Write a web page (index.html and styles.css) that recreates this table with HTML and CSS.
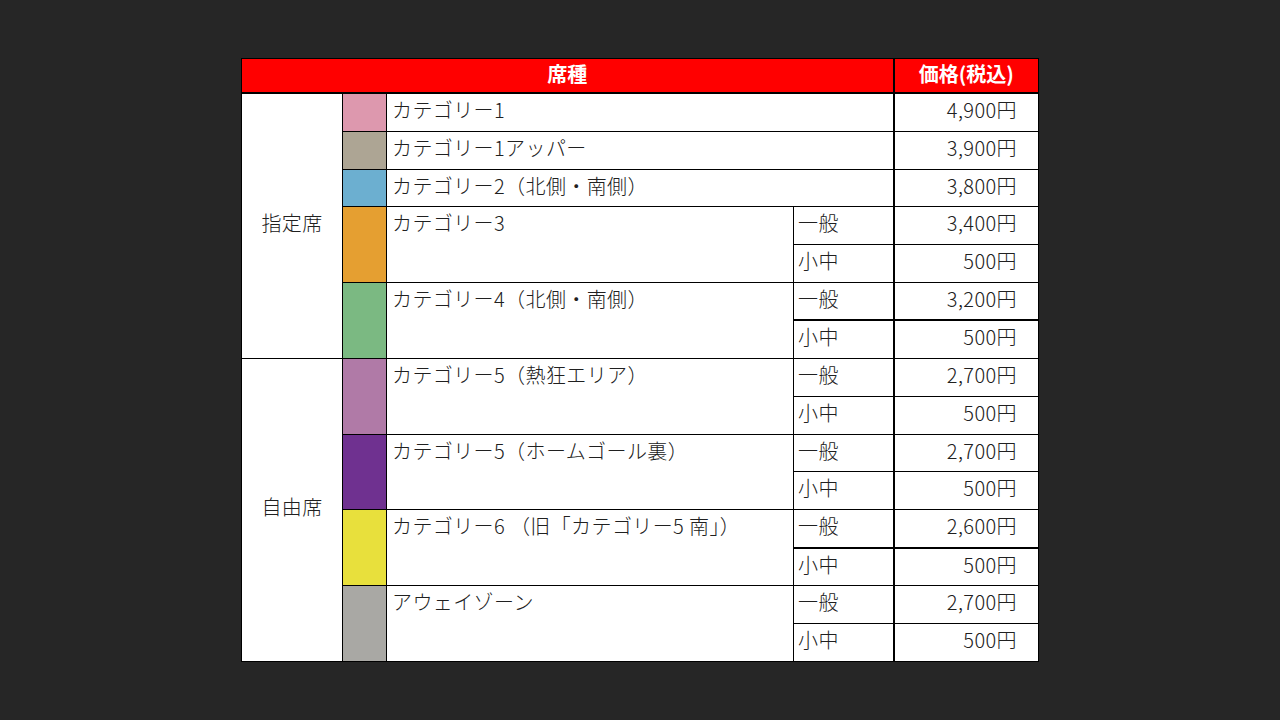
FILE: index.html
```html
<!DOCTYPE html>
<html lang="ja">
<head>
<meta charset="utf-8">
<title>席種・価格</title>
<link rel="stylesheet" href="styles.css">
</head>
<body>
<table class="price-table">
  <colgroup>
    <col class="c-type"><col class="c-swatch"><col class="c-name"><col class="c-sub"><col class="c-price">
  </colgroup>
  <thead>
    <tr class="head">
      <th colspan="4">席種</th>
      <th class="price">価格(税込)</th>
    </tr>
  </thead>
  <tbody>
    <tr>
      <td class="type" rowspan="7">指定席</td>
      <td class="swatch sw-pink"></td>
      <td class="name" colspan="2">カテゴリー1</td>
      <td class="price">4,900円</td>
    </tr>
    <tr>
      <td class="swatch sw-taupe"></td>
      <td class="name" colspan="2">カテゴリー1アッパー</td>
      <td class="price">3,900円</td>
    </tr>
    <tr>
      <td class="swatch sw-blue"></td>
      <td class="name" colspan="2">カテゴリー2（北側・南側）</td>
      <td class="price">3,800円</td>
    </tr>
    <tr>
      <td class="swatch sw-orange" rowspan="2"></td>
      <td class="name" rowspan="2">カテゴリー3</td>
      <td class="sub">一般</td>
      <td class="price">3,400円</td>
    </tr>
    <tr>
      <td class="sub">小中</td>
      <td class="price">500円</td>
    </tr>
    <tr>
      <td class="swatch sw-green" rowspan="2"></td>
      <td class="name" rowspan="2">カテゴリー4（北側・南側）</td>
      <td class="sub">一般</td>
      <td class="price">3,200円</td>
    </tr>
    <tr class="thick-top">
      <td class="sub">小中</td>
      <td class="price">500円</td>
    </tr>
    <tr>
      <td class="type" rowspan="8">自由席</td>
      <td class="swatch sw-mauve" rowspan="2"></td>
      <td class="name" rowspan="2">カテゴリー5（熱狂エリア）</td>
      <td class="sub">一般</td>
      <td class="price">2,700円</td>
    </tr>
    <tr>
      <td class="sub">小中</td>
      <td class="price">500円</td>
    </tr>
    <tr>
      <td class="swatch sw-purple" rowspan="2"></td>
      <td class="name" rowspan="2">カテゴリー5（ホームゴール裏）</td>
      <td class="sub">一般</td>
      <td class="price">2,700円</td>
    </tr>
    <tr>
      <td class="sub">小中</td>
      <td class="price">500円</td>
    </tr>
    <tr>
      <td class="swatch sw-yellow" rowspan="2"></td>
      <td class="name" rowspan="2">カテゴリー6 （旧「カテゴリー5 南」）</td>
      <td class="sub">一般</td>
      <td class="price">2,600円</td>
    </tr>
    <tr class="thick-top">
      <td class="sub">小中</td>
      <td class="price">500円</td>
    </tr>
    <tr>
      <td class="swatch sw-grey" rowspan="2"></td>
      <td class="name" rowspan="2">アウェイゾーン</td>
      <td class="sub">一般</td>
      <td class="price">2,700円</td>
    </tr>
    <tr>
      <td class="sub">小中</td>
      <td class="price">500円</td>
    </tr>
  </tbody>
</table>
</body>
</html>
```

FILE: styles.css
```css
html, body {
  margin: 0;
  padding: 0;
}
body {
  width: 1280px;
  height: 720px;
  background: #262626;
  display: flex;
  align-items: center;
  justify-content: center;
  font-family: "Noto Sans CJK JP", "Noto Sans", sans-serif;
  color: #202020;
}
.price-table {
  width: 797px;
  border-collapse: collapse;
  table-layout: fixed;
  background: #ffffff;
  font-size: 20px;
  font-weight: 300;
  letter-spacing: 0.4px;
  border: 1px solid #000;
}
.c-type { width: 101px; }
.c-swatch { width: 44px; }
.c-name { width: 407px; }
.c-sub { width: 100px; }
.c-price { width: 145px; }

.price-table th,
.price-table td {
  border: 1px solid #000;
  padding: 0;
  line-height: 32px;
  vertical-align: top;
  white-space: nowrap;
}
.price-table tbody tr {
  height: 37.87px;
}
.price-table .price {
  border-left: 2px solid #000;
  text-align: right;
  padding-right: 21px;
}
.price-table .head th {
  background: #ff0000;
  color: #ffffff;
  font-weight: bold;
  letter-spacing: 0;
  height: 30px;
  line-height: 28px;
  padding: 0 0 3px 0;
  vertical-align: middle;
  text-align: center;
  border-bottom: 2px solid #000;
  font-size: 20px;
}
.price-table .type {
  text-align: center;
  vertical-align: middle;
  padding-bottom: 6px;
}
.swatch {
  border-left: 2px solid #000;
  border-right: 2px solid #000;
}
.price-table .name {
  padding-left: 5px;
}
.price-table .sub {
  padding-left: 4px;
}
.thick-top td {
  border-top: 2px solid #000;
}

.sw-pink { background: #dd98ae; }
.sw-taupe { background: #ada594; }
.sw-blue { background: #6cafd0; }
.sw-orange { background: #e59f31; }
.sw-green { background: #7bb982; }
.sw-mauve { background: #b07aa7; }
.sw-purple { background: #6f3190; }
.sw-yellow { background: #e8e03c; }
.sw-grey { background: #a9a8a4; }
```
